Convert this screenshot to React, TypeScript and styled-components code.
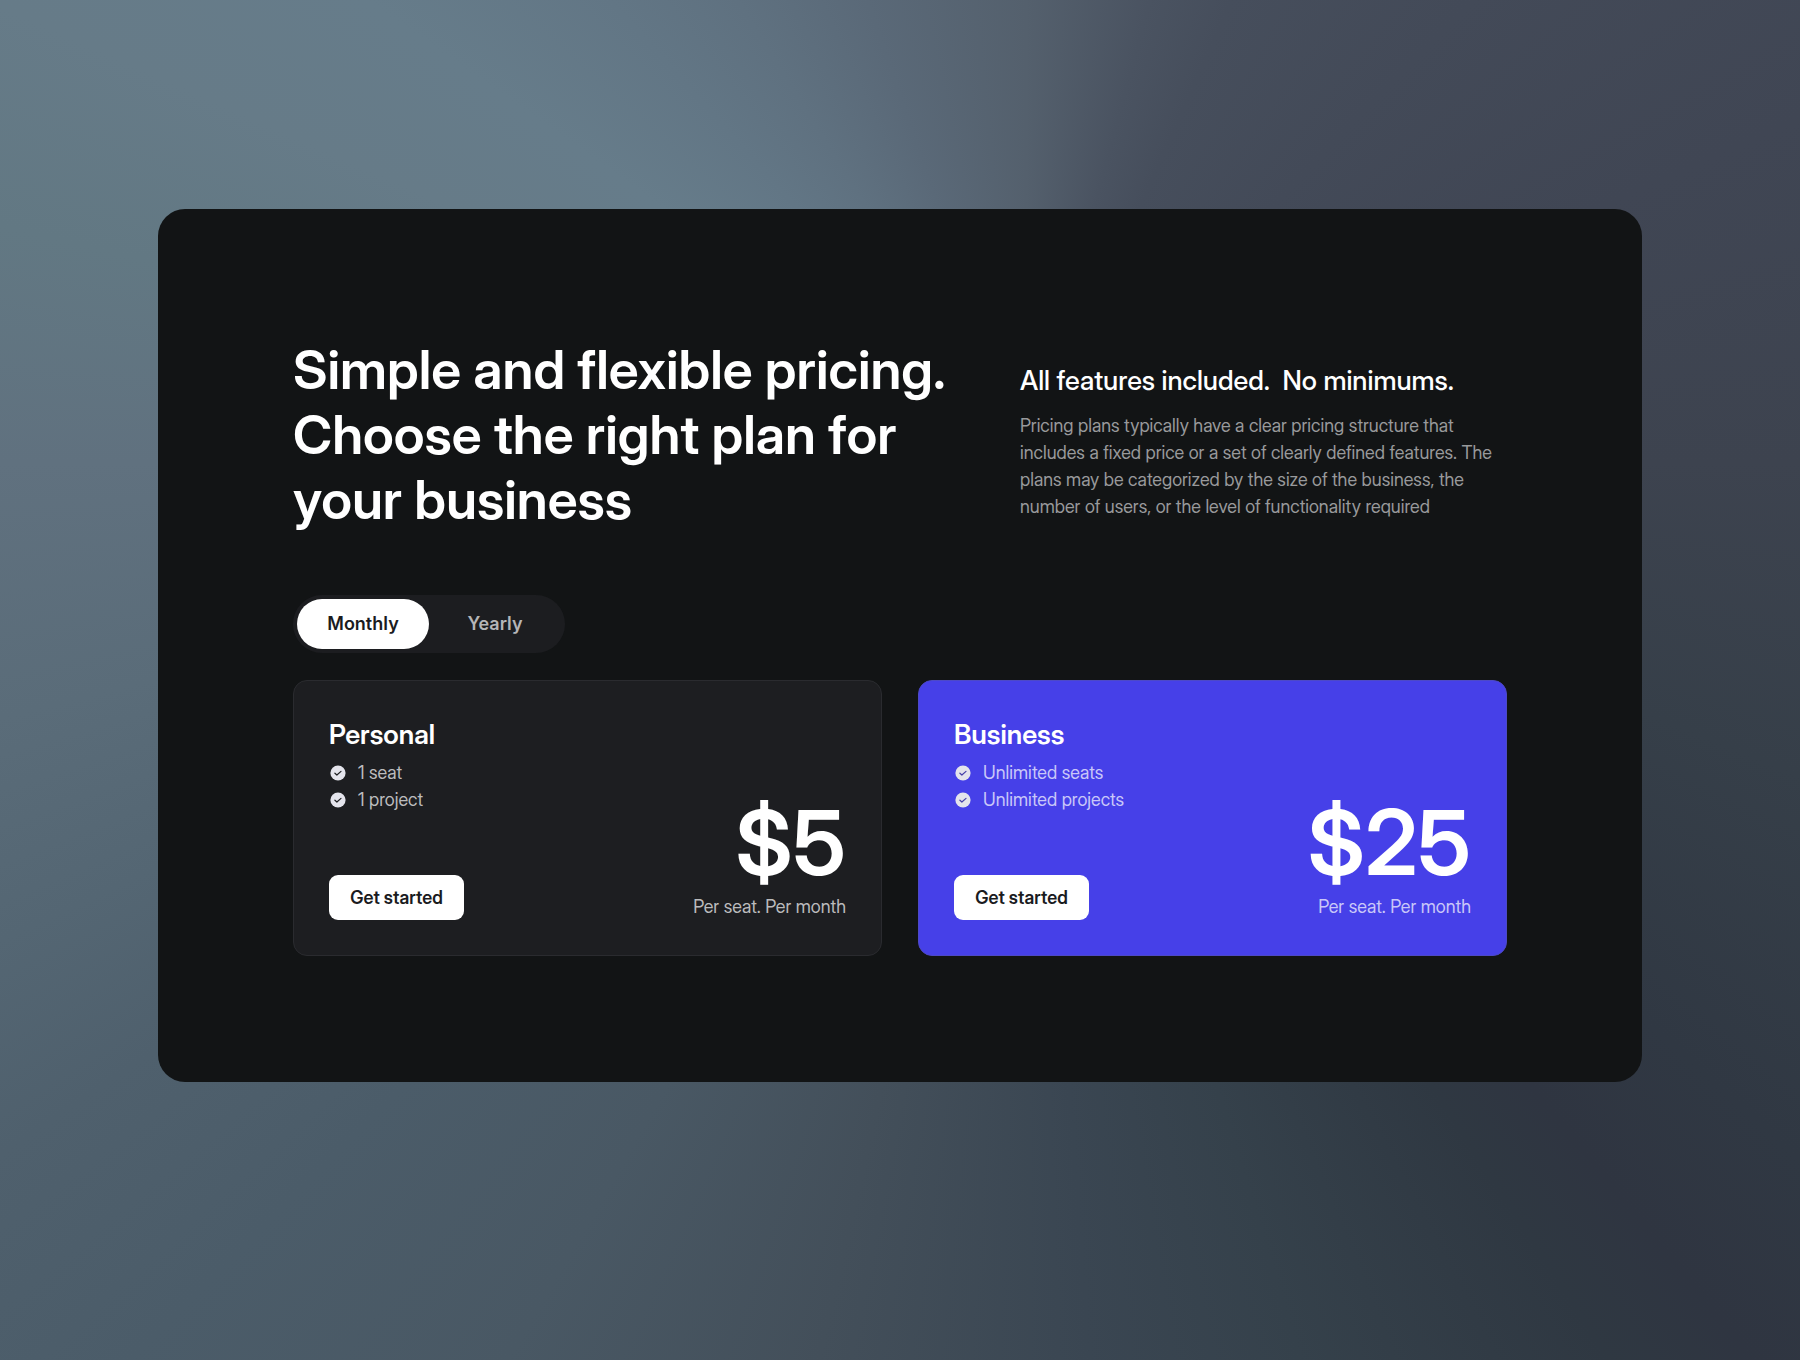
import React, { useState } from "react";
import styled, { createGlobalStyle, css } from "styled-components";

const GlobalStyle = createGlobalStyle`
  *, *::before, *::after { box-sizing: border-box; }
  body {
    margin: 0;
    background: #46525f;
    font-family: "Inter Display", Inter, "Liberation Sans", sans-serif;
    font-variation-settings: "opsz" 32;
    -webkit-font-smoothing: antialiased;
  }
  h1, h2, h3, p, ul, fieldset { margin: 0; padding: 0; }
  button { font-family: inherit; font-variation-settings: inherit; }
`;

const Page = styled.div`
  min-height: 100vh;
  padding: 209px 24px 278px;
  background: conic-gradient(
    from 0deg at 57% 34%,
    #54606d 0deg,
    #4a5361 15deg,
    #464e5c 24deg,
    #434a58 44deg,
    #404654 66deg,
    #3d434f 90deg,
    #363f49 112deg,
    #303843 132deg,
    #2f3541 141deg,
    #2f3842 147deg,
    #35414b 163deg,
    #3a4652 176deg,
    #434f5a 193deg,
    #495864 210deg,
    #4b5c69 225deg,
    #4f606d 236deg,
    #546673 245deg,
    #5a6c79 256deg,
    #60717f 270deg,
    #627883 283deg,
    #667b88 294deg,
    #667c8a 305deg,
    #627685 318deg,
    #5f7180 328deg,
    #5a6978 341deg,
    #54606d 360deg
  );
`;

const Panel = styled.main`
  display: flex;
  flex-direction: column;
  max-width: 1484px;
  margin: 0 auto;
  padding: 128px 135px 126px;
  border-radius: 27px;
  background: #121415;
  color: #fff;
`;

const Header = styled.header`
  display: flex;
  justify-content: space-between;
  align-items: flex-end;
  gap: 36px;
`;

const Headline = styled.h1`
  font-size: 54px;
  line-height: 65px;
  font-weight: 600;
`;

const Intro = styled.div`
  flex: 0 0 487px;
  padding-bottom: 12px;
`;

const IntroTitle = styled.h2`
  margin-bottom: 13px;
  font-size: 27px;
  line-height: 36px;
  font-weight: 500;
  white-space: pre-wrap;
`;

const IntroText = styled.p`
  color: #98999b;
  font-size: 18px;
  line-height: 27px;
`;

const Toggle = styled.fieldset`
  display: flex;
  align-self: flex-start;
  margin: 63px 0 27px;
  padding: 4px;
  border: 0;
  border-radius: 29px;
  background: #1c1d20;
`;

const ToggleInput = styled.input`
  position: absolute;
  opacity: 0;
  pointer-events: none;
`;

const ToggleOption = styled.label<{ $active: boolean }>`
  display: block;
  min-width: 132px;
  border-radius: 25px;
  font-family: Inter, "Liberation Sans", sans-serif;
  font-variation-settings: "opsz" 14;
  font-size: 18px;
  line-height: 50px;
  font-weight: 600;
  text-align: center;
  cursor: pointer;
  ${({ $active }) =>
    $active
      ? css`
          background: #fff;
          color: #1a1b1e;
        `
      : css`
          color: #b4b5b7;
        `}
`;

const Plans = styled.section`
  display: grid;
  grid-template-columns: repeat(2, minmax(0, 1fr));
  gap: 36px;
`;

const Card = styled.article<{ $featured: boolean }>`
  display: flex;
  justify-content: space-between;
  min-height: 276px;
  padding: 36px 35px 35px;
  border: 1px solid ${({ $featured }) => ($featured ? "#4d49c6" : "#2a2b2f")};
  border-radius: 14px;
  background: ${({ $featured }) => ($featured ? "#4640e8" : "#1d1e21")};
  color: ${({ $featured }) => ($featured ? "#c9c7f8" : "#bbbbbd")};
  font-size: 18px;
  line-height: 27px;
`;

const Details = styled.div`
  display: flex;
  flex-direction: column;
  align-items: flex-start;
`;

const PlanName = styled.h3`
  margin-bottom: 6px;
  color: #fff;
  font-size: 27px;
  line-height: 36px;
  font-weight: 600;
`;

const Features = styled.ul`
  list-style: none;
`;

const Feature = styled.li`
  display: flex;
  align-items: center;
  gap: 11px;
`;

const CtaButton = styled.button`
  height: 45px;
  min-width: 135px;
  margin-top: auto;
  padding: 0 18px;
  border: 0;
  border-radius: 9px;
  background: #fff;
  color: #1a1b1e;
  font-size: 18px;
  font-weight: 600;
  cursor: pointer;
`;

const Pricing = styled.div`
  display: flex;
  flex-direction: column;
  align-items: flex-end;
  justify-content: flex-end;
`;

const Price = styled.p`
  margin-bottom: 5px;
  color: #fff;
  font-size: 90px;
  line-height: 90px;
  font-weight: 600;
`;

const CheckIcon = ({ mark }: { mark: string }) => (
  <svg width="18" height="18" viewBox="0 0 18 18" fill="none" aria-hidden="true">
    <circle cx="9" cy="9" r="7.6" fill="#e4e4ec" />
    <path
      d="M5.9 9.2L7.9 11L12 7.4"
      stroke={mark}
      strokeWidth="1.2"
      strokeLinecap="round"
      strokeLinejoin="round"
    />
  </svg>
);

const periods = ["Monthly", "Yearly"];

const plans = [
  { name: "Personal", features: ["1 seat", "1 project"], price: "$5", featured: false },
  { name: "Business", features: ["Unlimited seats", "Unlimited projects"], price: "$25", featured: true },
];

export default function App() {
  const [period, setPeriod] = useState("Monthly");

  return (
    <>
      <GlobalStyle />
      <Page>
        <Panel>
          <Header>
            <Headline>
              Simple and flexible pricing.
              <br />
              Choose the right plan for
              <br />
              your business
            </Headline>
            <Intro>
              <IntroTitle>{"All features included.  No minimums."}</IntroTitle>
              <IntroText>
                Pricing plans typically have a clear pricing structure that includes a fixed price or a
                set of clearly defined features. The plans may be categorized by the size of the
                business, the number of users, or the level of functionality required
              </IntroText>
            </Intro>
          </Header>
          <Toggle aria-label="Billing period">
            {periods.map((name) => (
              <ToggleOption key={name} $active={name === period}>
                <ToggleInput
                  type="radio"
                  name="period"
                  value={name}
                  checked={name === period}
                  onChange={() => setPeriod(name)}
                />
                {name}
              </ToggleOption>
            ))}
          </Toggle>
          <Plans>
            {plans.map((plan) => (
              <Card key={plan.name} $featured={plan.featured}>
                <Details>
                  <PlanName>{plan.name}</PlanName>
                  <Features>
                    {plan.features.map((feature) => (
                      <Feature key={feature}>
                        <CheckIcon mark={plan.featured ? "#4640a8" : "#1d1e21"} />
                        {feature}
                      </Feature>
                    ))}
                  </Features>
                  <CtaButton type="button">Get started</CtaButton>
                </Details>
                <Pricing>
                  <Price>{plan.price}</Price>
                  <p>Per seat. Per month</p>
                </Pricing>
              </Card>
            ))}
          </Plans>
        </Panel>
      </Page>
    </>
  );
}
